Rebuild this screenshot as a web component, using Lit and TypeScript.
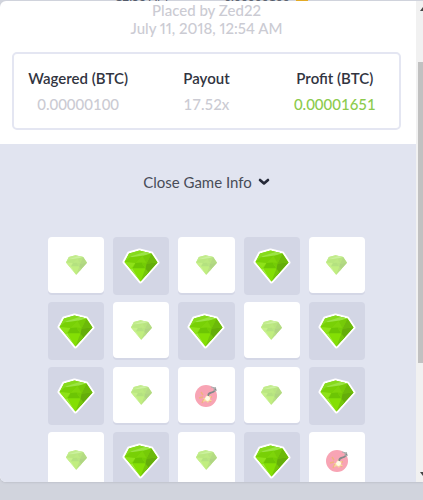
import { LitElement, html, css, svg } from "lit";
import { customElement, property } from "lit/decorators.js";
import { classMap } from "lit/directives/class-map.js";

type Kind = "gem" | "mine";
interface Tile {
  kind: Kind;
  picked: boolean;
}

// g: gem, G: gem picked by the player, m: mine
const ROWS = ["gGgGg", "GgGgG", "GgmgG", "gGgGm"];
const TILES: Tile[] = ROWS.join("")
  .split("")
  .map((c) => ({ kind: c === "m" ? "mine" : "gem", picked: c === "G" }));

const OUTLINE = "M4.5 3 L15 0 L27 3 L33 12 L16 31 L0 11.5 Z";

const gemShape = svg`
  <path d=${OUTLINE} fill="#83dc0a"/>
  <path d="M4.5 3 L15 0 L27 3 L4 9 L0 11.5 Z" fill="#86da1c"/>
  <path d="M6 6 L20 1.5 L27 3 L10 8 Z" fill="#9be444"/>
  <path d="M0 11.5 L5 7 L19 5 L11 13 Z" fill="#78d006"/>
  <path d="M11 13 L18 5.5 L22 13 Z" fill="#7ed40a"/>
  <path d="M18 5.5 L27 3 L22 13 Z" fill="#76ca08"/>
  <path d="M27 3 L33 12 L22 13 Z" fill="#6cb90a"/>
  <path d="M0 11.5 L11 12.5 L6 18.5 Z" fill="#8ee218"/>
  <path d="M11 12.5 L17 12 L21 18 L8 18 Z" fill="#6cc504"/>
  <path d="M17 12 L22 12.5 L21 18 Z" fill="#74cc06"/>
  <path d="M6 18.5 L8 18 L16 31 Z" fill="#9de93c"/>
  <path d="M8 18 L21 18 L16 31 Z" fill="#84df04"/>
  <path d="M22 13 L33 12 L21 25.5 L21 18 Z" fill="#64ad0a"/>
  <path d="M21 18 L24 22 L16 31 Z" fill="#74c50a"/>`;

@customElement("game-tile")
export class GameTile extends LitElement {
  @property() kind: Kind = "gem";
  @property({ type: Boolean }) picked = false;

  static styles = css`
    :host {
      display: block;
    }
    .tile {
      display: flex;
      align-items: center;
      justify-content: center;
      width: 100%;
      height: 56px;
      padding: 0;
      border: 0;
      border-radius: 4px;
      background: #fff;
      box-shadow: 0 2px 0 #d4d7e6;
    }
    .picked {
      height: 58px;
      background: #d3d6e5;
      box-shadow: none;
    }
    .art {
      display: block;
      width: 21px;
      height: 20px;
      opacity: 0.5;
    }
    .picked .art {
      width: 38px;
      height: 36px;
      opacity: 1;
    }
    .art.mine {
      width: 24px;
      height: 24px;
      opacity: 1;
    }
  `;

  render() {
    const label = this.kind === "mine" ? "Mine" : "Gem";
    return html`<button
      class=${classMap({ tile: true, picked: this.picked })}
      aria-label=${label}
    >
      ${this.kind === "mine" ? this.mine() : this.gem()}
    </button>`;
  }

  private gem() {
    return this.picked
      ? html`<svg class="art" viewBox="-2.5 -2.5 38 36">
          <path
            d=${OUTLINE}
            fill="#fff"
            stroke="#fff"
            stroke-width="4"
            stroke-linejoin="round"
          />
          ${gemShape}
        </svg>`
      : html`<svg class="art" viewBox="0 0 33 31">${gemShape}</svg>`;
  }

  private mine() {
    return html`<svg class="art mine" viewBox="0 0 24 24">
      <circle cx="12" cy="13" r="11" fill="#f8a4b4" />
      <path
        d="M7 9l2 3M5 15l4-1M8 20l2-4M17 19l-2-3M18 14l-3 0"
        stroke="#eeb47e"
        stroke-width="1.4"
        fill="none"
      />
      <path
        d="M14 13c0-4 3-3 5-4s3-2 2-4"
        stroke="#83898a"
        stroke-width="1.8"
        fill="none"
      />
      <path d="M17 4l5 1-3 1M20 8l3-1" stroke="#a9aeae" fill="none" />
      <path
        d="M13 11l1 3 3-1-1 3 2 2-3 0-1 2-2-2-3 1 1-3-1-1 3 0z"
        fill="#f6d99c"
      />
      <circle cx="13.5" cy="15.5" r="2.4" fill="#fffbe6" />
    </svg>`;
  }
}

@customElement("app-root")
export class AppRoot extends LitElement {
  static styles = css`
    :host {
      display: flex;
      flex-direction: column;
      box-sizing: border-box;
      height: 100vh;
      overflow: hidden;
      background: #d1d4dd;
      color: #31343f;
      font: 15px/18px Lato, "Liberation Sans", sans-serif;
      text-align: center;
    }
    .behind {
      display: flex;
      flex: none;
      align-items: flex-end;
      justify-content: center;
      gap: 56px;
      height: 1px;
      overflow: hidden;
      font-size: 12px;
      line-height: 8px;
      color: #4d5564;
    }
    .bet {
      display: flex;
      align-items: flex-end;
      gap: 6px;
    }
    .coin {
      width: 12px;
      height: 2px;
      background: #e5a91d;
    }
    .modal {
      display: flex;
      flex: 1;
      min-height: 0;
      margin-bottom: 18px;
      border-radius: 6px 0 0 6px;
      overflow: hidden;
      background: #fff;
      box-shadow: 0 1px 2px #bfc2cc;
    }
    .content {
      flex: 1;
      min-width: 0;
      display: flex;
      flex-direction: column;
    }
    .summary {
      padding: 0 15px 14px 12px;
    }
    .placed {
      margin: 0 0 15px;
      font-weight: 500;
      font-variant-numeric: proportional-nums;
      color: #cbcbd3;
    }
    .stats {
      display: grid;
      grid-template-columns: repeat(3, 1fr);
      margin: 0;
      padding: 14px 0;
      border: 2px solid #e4e6f2;
      border-radius: 5px;
    }
    .name {
      line-height: 20px;
      font-weight: 600;
      white-space: nowrap;
    }
    .value {
      margin: 6px 0 0;
      line-height: 20px;
      font-weight: 500;
      color: #cbcbd3;
    }
    .won {
      color: #8ccb4d;
    }
    .info {
      flex: 1;
      min-height: 0;
      overflow: hidden;
      padding: 28px 15px 0 12px;
      background: #e1e4f0;
    }
    .toggle {
      display: inline-flex;
      align-items: center;
      gap: 6px;
      padding: 0;
      border: 0;
      background: none;
      color: #484c58;
      font: inherit;
      line-height: 20px;
    }
    .chevron {
      width: 12px;
      height: 8px;
    }
    .board {
      display: grid;
      grid-template-columns: repeat(5, 1fr);
      gap: 7px 9px;
      margin: 45px 36px 0;
    }
    .row-tile {
      height: 58px;
    }
    .scrollbar {
      display: flex;
      flex-direction: column;
      align-items: flex-end;
      justify-content: space-between;
      flex: none;
      width: 7px;
      padding: 6px 0;
      box-sizing: border-box;
      background: #f1f1f1;
    }
    .arrow {
      width: 3px;
      height: 4px;
      flex: none;
    }
    .thumb {
      width: 5px;
      height: 64%;
      margin-bottom: 58px;
      background: #c1c1c1;
    }
  `;

  render() {
    return html`
      <div class="behind" aria-hidden="true">
        <span>12:53 AM</span>
        <span class="bet">0.00000100<i class="coin"></i></span>
      </div>
      <main class="modal">
        <div class="content">
          <section class="summary">
            <p class="placed">Placed by Zed22<br />July 11, 2018, 12:54 AM</p>
            <dl class="stats">
              ${this.stat("Wagered (BTC)", "0.00000100")}
              ${this.stat("Payout", "17.52x")}
              ${this.stat("Profit (BTC)", "0.00001651", true)}
            </dl>
          </section>
          <section class="info">
            <button class="toggle" aria-expanded="true">
              Close Game Info
              <svg class="chevron" viewBox="0 0 12 8">
                <path
                  d="M2 2l4 3.5L10 2"
                  fill="none"
                  stroke="#262a38"
                  stroke-width="2.6"
                  stroke-linecap="round"
                  stroke-linejoin="round"
                />
              </svg>
            </button>
            <div class="board">
              ${TILES.map(
                (t) => html`<game-tile
                  class="row-tile"
                  .kind=${t.kind}
                  .picked=${t.picked}
                ></game-tile>`
              )}
            </div>
          </section>
        </div>
        <div class="scrollbar" aria-hidden="true">
          <svg class="arrow" viewBox="0 0 3 4"><path d="M0 4L3 0V4z" fill="#444" /></svg>
          <div class="thumb"></div>
          <svg class="arrow" viewBox="0 0 3 4"><path d="M0 0L3 4V0z" fill="#444" /></svg>
        </div>
      </main>
    `;
  }

  private stat(name: string, value: string, won = false) {
    return html`<div>
      <dt class="name">${name}</dt>
      <dd class=${classMap({ value: true, won })}>${value}</dd>
    </div>`;
  }
}
